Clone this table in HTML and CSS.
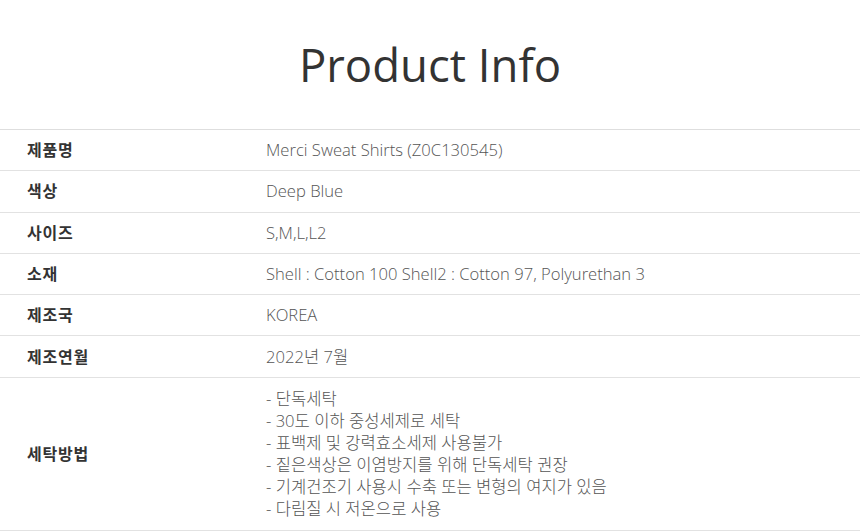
FILE: index.html
```html
<!DOCTYPE html>
<html lang="ko">
<head>
<meta charset="utf-8">
<link rel="stylesheet" href="styles.css">
</head>
<body>
<section class="info">
  <h1 class="title">Product Info</h1>
  <table class="spec">
    <tr><th>제품명</th><td>Merci Sweat Shirts (Z0C130545)</td></tr>
    <tr><th>색상</th><td>Deep Blue</td></tr>
    <tr><th>사이즈</th><td>S,M,L,L2</td></tr>
    <tr><th>소재</th><td>Shell : Cotton 100 Shell2 : Cotton 97, Polyurethan 3</td></tr>
    <tr><th>제조국</th><td>KOREA</td></tr>
    <tr><th>제조연월</th><td>2022년 7월</td></tr>
    <tr class="wash"><th>세탁방법</th><td>
      - 단독세탁<br>
      - 30도 이하 중성세제로 세탁<br>
      - 표백제 및 강력효소세제 사용불가<br>
      - 짙은색상은 이염방지를 위해 단독세탁 권장<br>
      - 기계건조기 사용시 수축 또는 변형의 여지가 있음<br>
      - 다림질 시 저온으로 사용
    </td></tr>
  </table>
</section>
</body>
</html>
```
FILE: styles.css
```css
html, body {
  margin: 0;
  padding: 0;
  background: #fff;
}
body {
  font-family: "Open Sans", "Noto Sans CJK KR", sans-serif;
  color: #333;
}
.info {
  padding-top: 30px;
}
.title {
  margin: 0 0 30px;
  text-align: center;
  font-family: "Open Sans", sans-serif;
  font-weight: 500;
  font-size: 45.5px;
  line-height: 69px;
  color: #333;
}
.spec {
  width: 100%;
  border-collapse: collapse;
  border-top: 1px solid #dedede;
}
.spec tr {
  border-bottom: 1px solid #e2e2e2;
}
.spec th {
  width: 239px;
  padding: 9.15px 0 9.15px 27px;
  text-align: left;
  vertical-align: middle;
  font-weight: 600;
  font-size: 16px;
  letter-spacing: 0.8px;
  line-height: 22px;
  color: #333;
}
.spec td {
  padding: 9.15px 0;
  font-size: 16.6px;
  line-height: 22px;
  color: #555;
  font-weight: 300;
}
.wash td {
  padding: 10px 0;
  line-height: 22px;
}
</style>
```
